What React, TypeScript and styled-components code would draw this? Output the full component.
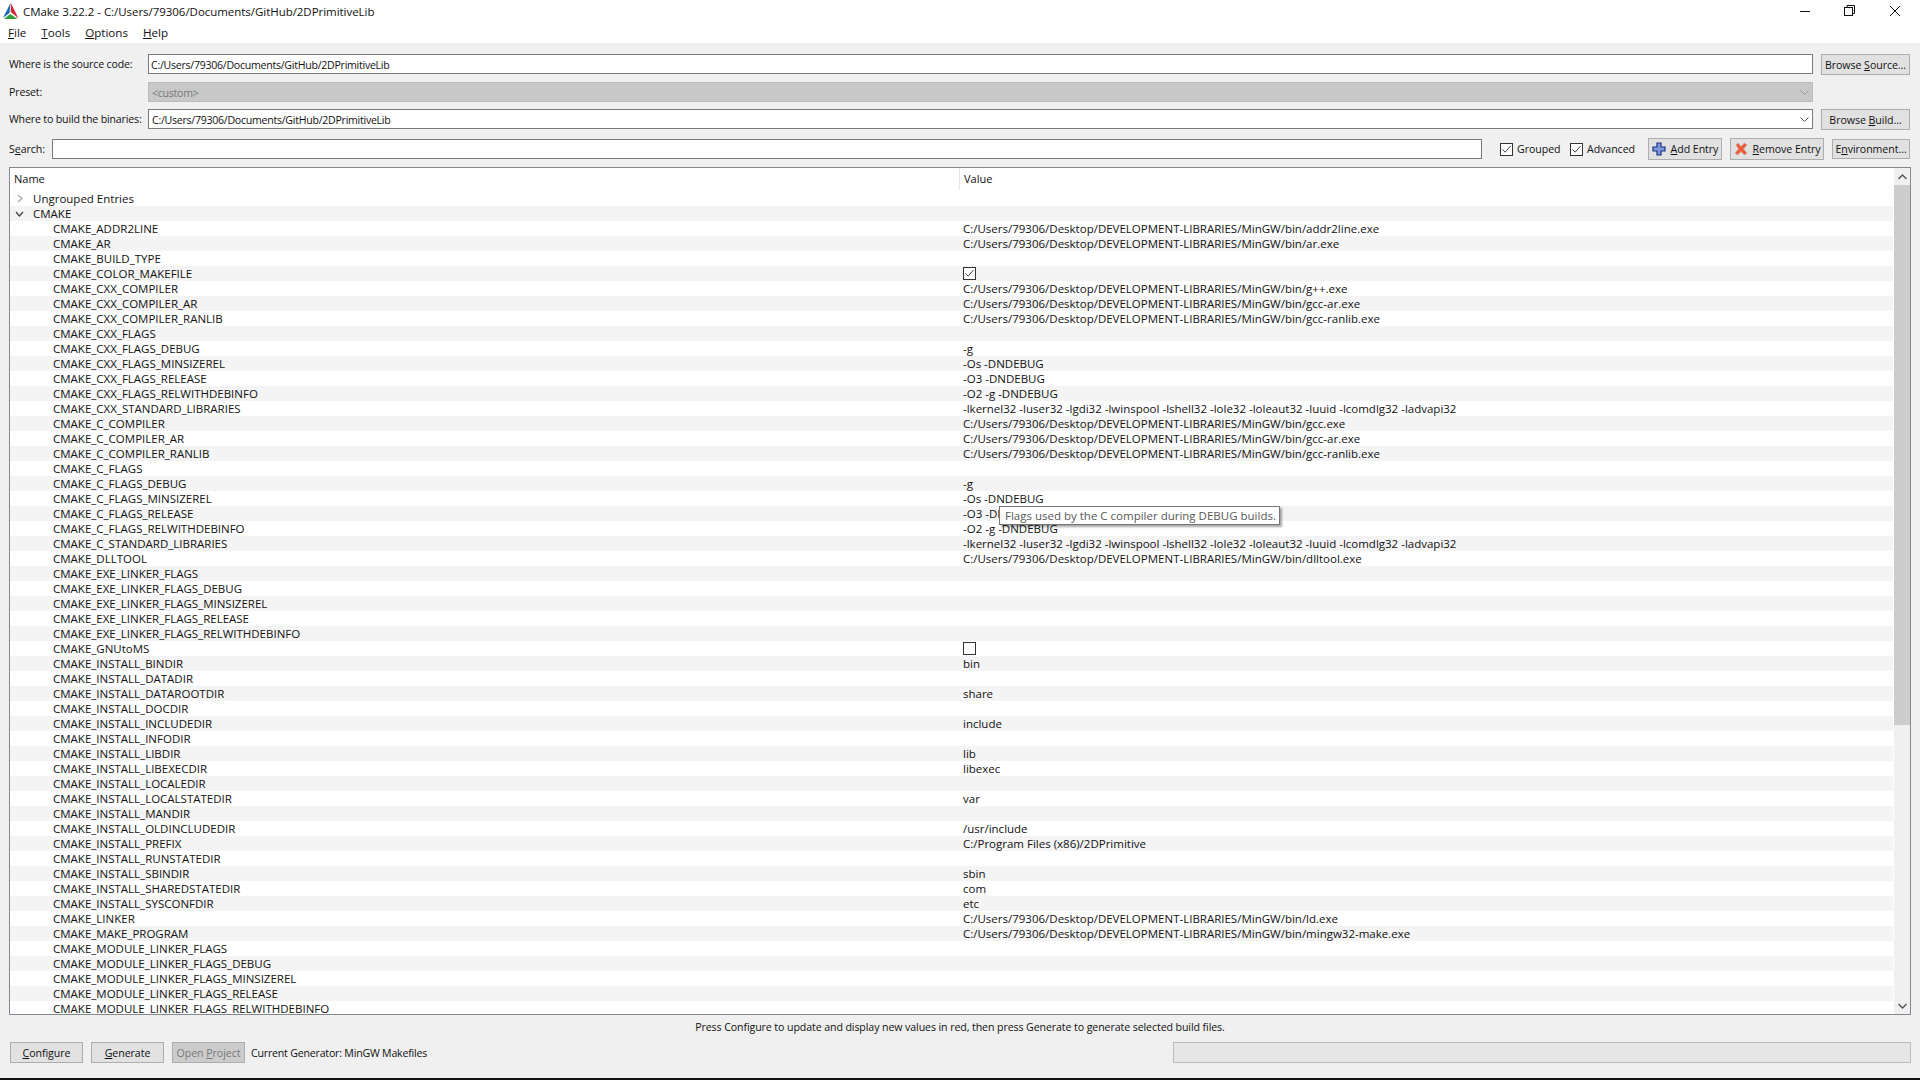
import React from "react";
import styled, { createGlobalStyle } from "styled-components";

const Global = createGlobalStyle`
  html, body { margin: 0; padding: 0; background: #f0f0f0; }
  body { font-family: "Open Sans", "Noto Sans", sans-serif; font-size: 10.6px; letter-spacing: -0.05px; color: #111; overflow: hidden; }
`;

const Window = styled.div`
  width: 1920px; height: 1080px; display: flex; flex-direction: column; position: relative;
  background: #f0f0f0; overflow: hidden; border-bottom: 2px solid #111; box-sizing: border-box;
`;
const TitleBar = styled.div`
  height: 22px; background: #fff; display: flex; align-items: center; padding-left: 2px; gap: 4px; font-size: 11.5px; letter-spacing: -0.04px;
`;
const TitleText = styled.span`flex: 1;`;
const WinControls = styled.div`display: flex; align-items: center; padding-right: 19px; gap: 33px;`;
const MenuBar = styled.div`
  height: 21px; background: #fff; display: flex; align-items: center; padding-left: 8px; gap: 15px; font-size: 11.6px; letter-spacing: 0;
`;
const U = styled.span`text-decoration: underline; text-underline-offset: 1px;`;
const Form = styled.div`
  padding: 11px 10px 0 9px; display: flex; flex-direction: column;
`;
const FormRow = styled.div<{ $mb: number }>`
  display: flex; align-items: flex-start; height: 21px; margin-bottom: ${p => p.$mb}px;
`;
const FieldLabel = styled.div`width: 139px; line-height: 21px; flex: none; white-space: nowrap; letter-spacing: -0.16px;`;
const Field = styled.div<{ $disabled?: boolean; $pad: number }>`
  box-sizing: border-box; height: 20px; width: 1665px; flex: none;
  border: 1px solid ${p => (p.$disabled ? "#bcbcbc" : "#7a7a7a")};
  background: ${p => (p.$disabled ? "#c8c8c8" : "#fff")};
  color: ${p => (p.$disabled ? "#787878" : "#111")};
  padding: 1px 3px 0 ${p => p.$pad}px; display: flex; justify-content: space-between; align-items: center;
  letter-spacing: -0.27px;
`;
const PushButton = styled.div<{ $w: number; $ml?: number; $h?: number; $disabled?: boolean }>`
  box-sizing: border-box; width: ${p => p.$w}px; height: ${p => p.$h ?? 21}px; margin-left: ${p => p.$ml ?? 0}px; flex: none;
  border: 1px solid #adadad; background: ${p => (p.$disabled ? "#cccccc" : "#e1e1e1")};
  color: ${p => (p.$disabled ? "#787878" : "#111")};
  display: flex; align-items: center; justify-content: center; gap: 5px; white-space: nowrap;
`;
const SearchRow = styled.div`
  display: flex; align-items: center; height: 20px; margin-bottom: 8px;
`;
const SearchLabel = styled.div`width: 43px; flex: none;`;
const SearchBox = styled.div`
  box-sizing: border-box; width: 1430px; height: 20px; flex: none; border: 1px solid #7a7a7a; background: #fff;
`;
const CheckWrap = styled.div<{ $ml: number; $w: number }>`
  display: flex; align-items: center; gap: 4px; margin-left: ${p => p.$ml}px; width: ${p => p.$w}px; flex: none;
`;
const CheckBox = styled.span`
  box-sizing: border-box; width: 13px; height: 13px; border: 1px solid #333; background: #fff; display: inline-flex;
  align-items: center; justify-content: center; flex: none;
`;
const Tree = styled.div`
  box-sizing: border-box; margin: 0 9px; width: 1902px; height: 848px; border: 1px solid #828790; background: #fff;
  display: flex; overflow: hidden; flex: none;
`;
const TreeBody = styled.div`flex: 1; min-width: 0; overflow: hidden; font-size: 11.5px; letter-spacing: 0;`;
const TreeHeader = styled.div`
  height: 23px; display: grid; grid-template-columns: 949px 1fr; font-size: 11px;
`;
const HeaderName = styled.div`padding-left: 4px; line-height: 22px;`;
const HeaderValue = styled.div`border-left: 1px solid #e5e5e5; padding-left: 4px; line-height: 22px; height: 22px;`;
const Row = styled.div<{ $alt: boolean }>`
  height: 15px; display: grid; grid-template-columns: 953px 1fr; line-height: 15px; white-space: nowrap; margin-right: 1px;
  background: ${p => (p.$alt ? "#f4f4f4" : "#fff")};
`;
const NameCell = styled.div<{ $group?: boolean }>`
  padding-left: ${p => (p.$group ? 23 : 43)}px; position: relative;
`;
const Arrow = styled.svg`position: absolute; left: 5px; top: 3px;`;
const ValueCell = styled.div`display: flex; align-items: center; height: 15px;`;
const ScrollBar = styled.div`
  width: 16px; flex: none; background: #f0f0f0; display: flex; flex-direction: column; align-items: stretch;
`;
const ScrollBtn = styled.div`height: 17px; display: flex; align-items: center; justify-content: center; flex: none;`;
const Thumb = styled.div`height: 540px; background: #cdcdcd; flex: none;`;
const ScrollSpace = styled.div`flex: 1;`;
const Hint = styled.div`height: 27px; text-align: center; line-height: 24px; flex: none; letter-spacing: -0.09px;`;
const Footer = styled.div`
  display: flex; align-items: flex-start; padding-left: 10px; height: 21px;
`;
const GeneratorText = styled.div`margin-left: 6px; line-height: 22px; width: 922px; flex: none; letter-spacing: -0.2px;`;
const Progress = styled.div`
  box-sizing: border-box; width: 738px; height: 21px; border: 1px solid #bcbcbc; background: #e6e6e6; flex: none;
`;
const Tooltip = styled.div`
  position: absolute; left: 999px; top: 506px; width: 281px; height: 19px; box-sizing: border-box; background: #fff; font-size: 11.5px; letter-spacing: 0;
  border: 1px solid #767676; color: #575757; line-height: 17px; padding-left: 5px; box-shadow: 2px 2px 2px rgba(0,0,0,.35); white-space: nowrap;
`;

const BIN = "C:/Users/79306/Desktop/DEVELOPMENT-LIBRARIES/MinGW/bin/";
const LIBS = "-lkernel32 -luser32 -lgdi32 -lwinspool -lshell32 -lole32 -loleaut32 -luuid -lcomdlg32 -ladvapi32";
const SRC = "C:/Users/79306/Documents/GitHub/2DPrimitiveLib";

const entries: [string, string | boolean][] = [
  ["CMAKE_ADDR2LINE", BIN + "addr2line.exe"],
  ["CMAKE_AR", BIN + "ar.exe"],
  ["CMAKE_BUILD_TYPE", ""],
  ["CMAKE_COLOR_MAKEFILE", true],
  ["CMAKE_CXX_COMPILER", BIN + "g++.exe"],
  ["CMAKE_CXX_COMPILER_AR", BIN + "gcc-ar.exe"],
  ["CMAKE_CXX_COMPILER_RANLIB", BIN + "gcc-ranlib.exe"],
  ["CMAKE_CXX_FLAGS", ""],
  ["CMAKE_CXX_FLAGS_DEBUG", "-g"],
  ["CMAKE_CXX_FLAGS_MINSIZEREL", "-Os -DNDEBUG"],
  ["CMAKE_CXX_FLAGS_RELEASE", "-O3 -DNDEBUG"],
  ["CMAKE_CXX_FLAGS_RELWITHDEBINFO", "-O2 -g -DNDEBUG"],
  ["CMAKE_CXX_STANDARD_LIBRARIES", LIBS],
  ["CMAKE_C_COMPILER", BIN + "gcc.exe"],
  ["CMAKE_C_COMPILER_AR", BIN + "gcc-ar.exe"],
  ["CMAKE_C_COMPILER_RANLIB", BIN + "gcc-ranlib.exe"],
  ["CMAKE_C_FLAGS", ""],
  ["CMAKE_C_FLAGS_DEBUG", "-g"],
  ["CMAKE_C_FLAGS_MINSIZEREL", "-Os -DNDEBUG"],
  ["CMAKE_C_FLAGS_RELEASE", "-O3 -DNDEBUG"],
  ["CMAKE_C_FLAGS_RELWITHDEBINFO", "-O2 -g -DNDEBUG"],
  ["CMAKE_C_STANDARD_LIBRARIES", LIBS],
  ["CMAKE_DLLTOOL", BIN + "dlltool.exe"],
  ["CMAKE_EXE_LINKER_FLAGS", ""],
  ["CMAKE_EXE_LINKER_FLAGS_DEBUG", ""],
  ["CMAKE_EXE_LINKER_FLAGS_MINSIZEREL", ""],
  ["CMAKE_EXE_LINKER_FLAGS_RELEASE", ""],
  ["CMAKE_EXE_LINKER_FLAGS_RELWITHDEBINFO", ""],
  ["CMAKE_GNUtoMS", false],
  ["CMAKE_INSTALL_BINDIR", "bin"],
  ["CMAKE_INSTALL_DATADIR", ""],
  ["CMAKE_INSTALL_DATAROOTDIR", "share"],
  ["CMAKE_INSTALL_DOCDIR", ""],
  ["CMAKE_INSTALL_INCLUDEDIR", "include"],
  ["CMAKE_INSTALL_INFODIR", ""],
  ["CMAKE_INSTALL_LIBDIR", "lib"],
  ["CMAKE_INSTALL_LIBEXECDIR", "libexec"],
  ["CMAKE_INSTALL_LOCALEDIR", ""],
  ["CMAKE_INSTALL_LOCALSTATEDIR", "var"],
  ["CMAKE_INSTALL_MANDIR", ""],
  ["CMAKE_INSTALL_OLDINCLUDEDIR", "/usr/include"],
  ["CMAKE_INSTALL_PREFIX", "C:/Program Files (x86)/2DPrimitive"],
  ["CMAKE_INSTALL_RUNSTATEDIR", ""],
  ["CMAKE_INSTALL_SBINDIR", "sbin"],
  ["CMAKE_INSTALL_SHAREDSTATEDIR", "com"],
  ["CMAKE_INSTALL_SYSCONFDIR", "etc"],
  ["CMAKE_LINKER", BIN + "ld.exe"],
  ["CMAKE_MAKE_PROGRAM", BIN + "mingw32-make.exe"],
  ["CMAKE_MODULE_LINKER_FLAGS", ""],
  ["CMAKE_MODULE_LINKER_FLAGS_DEBUG", ""],
  ["CMAKE_MODULE_LINKER_FLAGS_MINSIZEREL", ""],
  ["CMAKE_MODULE_LINKER_FLAGS_RELEASE", ""],
  ["CMAKE_MODULE_LINKER_FLAGS_RELWITHDEBINFO", ""],
];

const Check = ({ on }: { on: boolean }) => (
  <CheckBox>
    {on && (
      <svg width="11" height="11" viewBox="0 0 11 11">
        <path d="M1.5 5.5 L4.2 8.2 L9.5 2" fill="none" stroke="#444" strokeWidth="1" />
      </svg>
    )}
  </CheckBox>
);

const Chevron = ({ color = "#555" }: { color?: string }) => (
  <svg width="9" height="6" viewBox="0 0 9 6">
    <path d="M0.5 0.5 L4.5 4.5 L8.5 0.5" fill="none" stroke={color} strokeWidth="1" />
  </svg>
);

const Logo = () => (
  <svg width="17" height="18" viewBox="0 0 17 18">
    <path d="M8.5 1 L1 16 L7.5 11 Z" fill="#1c67b5" />
    <path d="M8.8 1 L16.5 16.5 L9 10 Z" fill="#d3232d" />
    <path d="M2 17 L8.2 12 L15.5 17 Z" fill="#2f9e3b" />
    <path d="M8.4 5 L8.6 10 L7.7 10.8 Z" fill="#aaa" />
  </svg>
);

const PlusIcon = () => (
  <svg width="14" height="14" viewBox="0 0 14 14">
    <path d="M5 1 H9 V5 H13 V9 H9 V13 H5 V9 H1 V5 H5 Z" fill="#7f9be0" stroke="#1d2f80" strokeWidth="1.2" />
  </svg>
);
const CrossIcon = () => (
  <svg width="14" height="14" viewBox="0 0 14 14">
    <path d="M2 3 L4 1 L7 4.5 L10.5 1 L13 3 L9.5 7 L13 11 L10.5 13 L7 9.5 L3.5 13 L1 11 L4.5 7 Z" fill="#ee5a35" stroke="#c9a596" strokeWidth="0.8" />
  </svg>
);

export default function App() {
  return (
    <Window>
      <Global />
      <TitleBar>
        <Logo />
        <TitleText>CMake 3.22.2 - {SRC}</TitleText>
        <WinControls>
          <svg width="11" height="11" viewBox="0 0 11 11"><path d="M0 5.5 H10" stroke="#111" /></svg>
          <svg width="12" height="12" viewBox="0 0 12 12" fill="none" stroke="#111"><rect x="0.5" y="2.5" width="8" height="8" /><path d="M3 2.5 V0.5 H10.5 V8.5 H8.5" /></svg>
          <svg width="12" height="12" viewBox="0 0 12 12"><path d="M1 1 L11 11 M11 1 L1 11" stroke="#111" /></svg>
        </WinControls>
      </TitleBar>
      <MenuBar>
        <span><U>F</U>ile</span>
        <span><U>T</U>ools</span>
        <span><U>O</U>ptions</span>
        <span><U>H</U>elp</span>
      </MenuBar>
      <Form>
        <FormRow $mb={7}>
          <FieldLabel>Where is the source code:</FieldLabel>
          <Field $pad={2}>{SRC}</Field>
          <PushButton $w={89} $ml={8}><span>Browse <U>S</U>ource...</span></PushButton>
        </FormRow>
        <FormRow $mb={6}>
          <FieldLabel>Preset:</FieldLabel>
          <Field $disabled $pad={3}>
            <span>&lt;custom&gt;</span>
            <Chevron color="#9a9a9a" />
          </Field>
        </FormRow>
        <FormRow $mb={9}>
          <FieldLabel>Where to build the binaries:</FieldLabel>
          <Field $pad={3}>
            <span>{SRC}</span>
            <Chevron />
          </Field>
          <PushButton $w={89} $ml={8}><span>Browse <U>B</U>uild...</span></PushButton>
        </FormRow>
        <SearchRow>
          <SearchLabel>S<U>e</U>arch:</SearchLabel>
          <SearchBox />
          <CheckWrap $ml={18} $w={70}><Check on /><span>Grouped</span></CheckWrap>
          <CheckWrap $ml={0} $w={78}><Check on /><span>Advanced</span></CheckWrap>
          <PushButton $w={74} $h={22}><PlusIcon /><span><U>A</U>dd Entry</span></PushButton>
          <PushButton $w={94} $ml={8} $h={22}><CrossIcon /><span><U>R</U>emove Entry</span></PushButton>
          <PushButton $w={78} $ml={8} $h={20}><span>E<U>n</U>vironment...</span></PushButton>
        </SearchRow>
      </Form>
      <Tree>
        <TreeBody>
          <TreeHeader>
            <HeaderName>Name</HeaderName>
            <HeaderValue>Value</HeaderValue>
          </TreeHeader>
          <Row $alt={false}>
            <NameCell $group>
              <Arrow width="9" height="9" viewBox="0 0 9 9"><path d="M3 1 L7 4.5 L3 8" fill="none" stroke="#aaa" strokeWidth="1.3" /></Arrow>
              Ungrouped Entries
            </NameCell>
            <ValueCell />
          </Row>
          <Row $alt>
            <NameCell $group>
              <Arrow width="9" height="9" viewBox="0 0 9 9"><path d="M1 3 L4.5 7 L8 3" fill="none" stroke="#444" strokeWidth="1.3" /></Arrow>
              CMAKE
            </NameCell>
            <ValueCell />
          </Row>
          {entries.map(([name, value], i) => (
            <Row key={name} $alt={i % 2 === 1}>
              <NameCell>{name}</NameCell>
              <ValueCell>{typeof value === "boolean" ? <Check on={value} /> : value}</ValueCell>
            </Row>
          ))}
        </TreeBody>
        <ScrollBar>
          <ScrollBtn>
            <svg width="9" height="6" viewBox="0 0 9 6"><path d="M0.5 5 L4.5 1 L8.5 5" fill="none" stroke="#555" strokeWidth="1.4" /></svg>
          </ScrollBtn>
          <Thumb />
          <ScrollSpace />
          <ScrollBtn>
            <svg width="9" height="6" viewBox="0 0 9 6"><path d="M0.5 1 L4.5 5 L8.5 1" fill="none" stroke="#555" strokeWidth="1.4" /></svg>
          </ScrollBtn>
        </ScrollBar>
      </Tree>
      <Hint>Press Configure to update and display new values in red, then press Generate to generate selected build files.</Hint>
      <Footer>
        <PushButton $w={73}><span><U>C</U>onfigure</span></PushButton>
        <PushButton $w={73} $ml={8}><span><U>G</U>enerate</span></PushButton>
        <PushButton $w={73} $ml={8} $disabled><span>Open <U>P</U>roject</span></PushButton>
        <GeneratorText>Current Generator: MinGW Makefiles</GeneratorText>
        <Progress />
      </Footer>
      <Tooltip>Flags used by the C compiler during DEBUG builds.</Tooltip>
    </Window>
  );
}
